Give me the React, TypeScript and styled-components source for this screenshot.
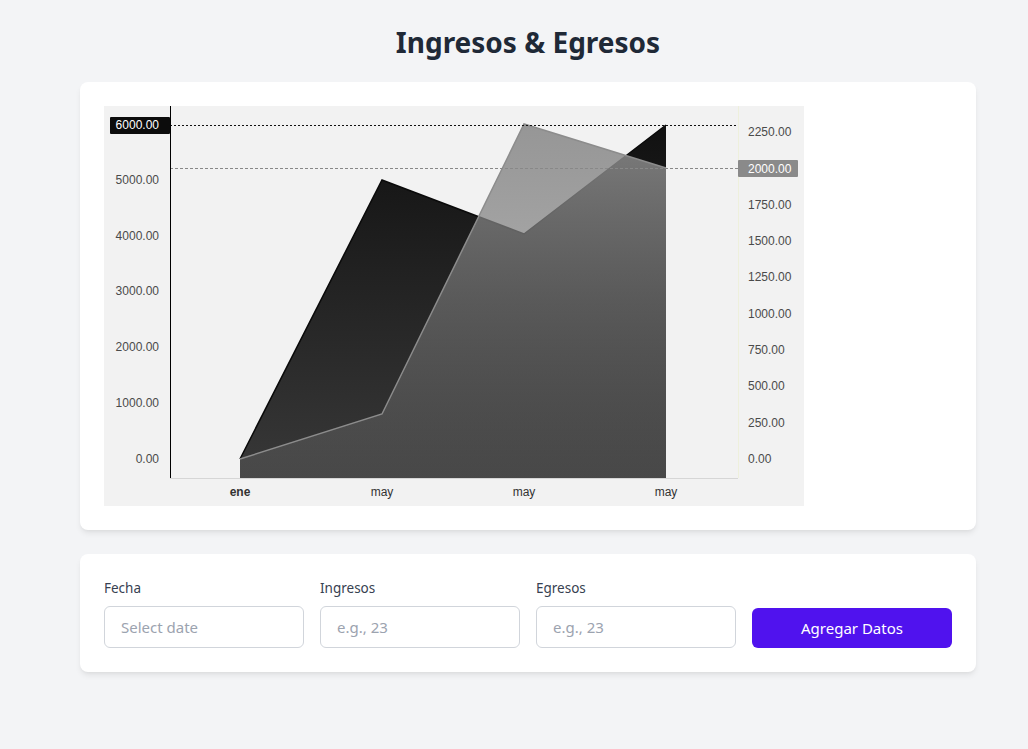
import styled, { createGlobalStyle } from "styled-components";

const GlobalStyle = createGlobalStyle`
    body {
        margin: 0;
        background: #f3f4f6;
        font-family: "Noto Sans", Lato, sans-serif;
    }
`;

const Page = styled.main`
    min-height: 100vh;
    padding: 24px 52px 24px 80px;
    box-sizing: border-box;
    width: 1028px;
`;

const Title = styled.h1`
    margin: 0 0 22px;
    text-align: center;
    font-size: 28px;
    line-height: 36px;
    font-weight: 700;
    color: #1f2937;
`;

const Card = styled.section`
    background: #fff;
    border-radius: 8px;
    padding: 24px;
    box-shadow: 0 4px 6px -1px rgba(0, 0, 0, 0.08), 0 2px 4px -2px rgba(0, 0, 0, 0.06);
    & + & {
        margin-top: 24px;
    }
`;

const ChartBox = styled.div`
    width: 700px;
    height: 400px;
    background: #f2f2f2;
    svg {
        display: block;
        font-family: "Liberation Sans", Arial, sans-serif;
        font-size: 12px;
    }
`;

const FormRow = styled.form`
    display: flex;
    align-items: flex-end;
    gap: 16px;
`;

const Field = styled.div`
    display: flex;
    flex-direction: column;
    gap: 8px;
    width: 200px;
`;

const Label = styled.label`
    font-size: 13.5px;
    line-height: 20px;
    color: #374151;
`;

const Input = styled.input`
    box-sizing: border-box;
    width: 200px;
    height: 42px;
    border: 1px solid #d1d5db;
    border-radius: 6px;
    padding: 0 16px;
    font: inherit;
    font-size: 15px;
    color: #111827;
    background: #fff;
    &::placeholder {
        color: #9ca3af;
    }
`;

const Button = styled.button`
    width: 200px;
    height: 40px;
    border: none;
    border-radius: 6px;
    background: #5012ee;
    color: #fff;
    font: inherit;
    font-size: 15px;
    cursor: pointer;
`;

const leftTicks = [
    { v: "5000.00", y: 74 },
    { v: "4000.00", y: 130 },
    { v: "3000.00", y: 185 },
    { v: "2000.00", y: 241 },
    { v: "1000.00", y: 297 },
    { v: "0.00", y: 353 },
];

const rightTicks = [
    { v: "2250.00", y: 26 },
    { v: "1750.00", y: 99 },
    { v: "1500.00", y: 135 },
    { v: "1250.00", y: 171 },
    { v: "1000.00", y: 208 },
    { v: "750.00", y: 244 },
    { v: "500.00", y: 280 },
    { v: "250.00", y: 317 },
    { v: "0.00", y: 353 },
];

const xLabels = [
    { t: "ene", x: 136, bold: true },
    { t: "may", x: 278 },
    { t: "may", x: 420 },
    { t: "may", x: 562 },
];

const ingresos = [[136, 353], [278, 74], [420, 128], [562, 19]];
const egresos = [[136, 353], [278, 308], [420, 18], [562, 62]];

function line(pts: number[][]) {
    return pts.map((p, i) => (i === 0 ? "M" : "L") + p[0] + " " + p[1]).join(" ");
}

function area(pts: number[][]) {
    const last = pts[pts.length - 1];
    return line(pts) + ` L${last[0]} 372 L${pts[0][0]} 372 Z`;
}

function Chart() {
    return (
        <ChartBox>
            <svg width="700" height="400" viewBox="0 0 700 400">
                <defs>
                    <linearGradient id="darkFill" gradientUnits="userSpaceOnUse" x1="0" y1="19" x2="0" y2="372">
                        <stop offset="0" stopColor="#111111" />
                        <stop offset="1" stopColor="#383838" />
                    </linearGradient>
                    <linearGradient id="grayFill" gradientUnits="userSpaceOnUse" x1="0" y1="18" x2="0" y2="372">
                        <stop offset="0" stopColor="rgb(140,140,140)" stopOpacity="0.9" />
                        <stop offset="1" stopColor="rgb(110,110,110)" stopOpacity="0.3" />
                    </linearGradient>
                </defs>

                <path d={area(ingresos)} fill="url(#darkFill)" />
                <path d={line(ingresos)} fill="none" stroke="#0a0a0a" strokeWidth="1.5" />
                <path d={area(egresos)} fill="url(#grayFill)" />
                <path d={line(egresos)} fill="none" stroke="#8c8c8c" strokeWidth="1.5" />

                <line x1="66" y1="19.5" x2="634" y2="19.5" stroke="#111" strokeDasharray="2 2" />
                <line x1="66" y1="62.5" x2="634" y2="62.5" stroke="#888" strokeDasharray="3 2" />

                <line x1="66.5" y1="0" x2="66.5" y2="372" stroke="#000" />
                <line x1="66" y1="372.5" x2="634" y2="372.5" stroke="#d6d6d6" />
                <line x1="634.5" y1="0" x2="634.5" y2="372" stroke="#eef0dc" />

                {leftTicks.map((t) => (
                    <text key={t.v} x="55" y={t.y + 4} textAnchor="end" fill="#4a4a4a">{t.v}</text>
                ))}
                <rect x="6" y="11" width="60" height="17" rx="1" fill="#0c0c0c" />
                <text x="55" y="23" textAnchor="end" fill="#fff">6000.00</text>

                {rightTicks.map((t) => (
                    <text key={t.v} x="644" y={t.y + 4} fill="#4a4a4a">{t.v}</text>
                ))}
                <rect x="634" y="54" width="60" height="17" rx="1" fill="#8a8a8a" />
                <text x="644" y="67" fill="#fff">2000.00</text>

                {xLabels.map((l, i) => (
                    <text key={i} x={l.x} y="390" textAnchor="middle" fill="#333" fontWeight={l.bold ? 700 : 400}>{l.t}</text>
                ))}
            </svg>
        </ChartBox>
    );
}

export default function App() {
    return (
        <Page>
            <GlobalStyle />
            <Title>Ingresos &amp; Egresos</Title>
            <Card>
                <Chart />
            </Card>
            <Card>
                <FormRow onSubmit={(e) => e.preventDefault()}>
                    <Field>
                        <Label htmlFor="fecha">Fecha</Label>
                        <Input id="fecha" type="text" placeholder="Select date" />
                    </Field>
                    <Field>
                        <Label htmlFor="ingresos">Ingresos</Label>
                        <Input id="ingresos" type="text" placeholder="e.g., 23" />
                    </Field>
                    <Field>
                        <Label htmlFor="egresos">Egresos</Label>
                        <Input id="egresos" type="text" placeholder="e.g., 23" />
                    </Field>
                    <Button type="submit">Agregar Datos</Button>
                </FormRow>
            </Card>
        </Page>
    );
}
